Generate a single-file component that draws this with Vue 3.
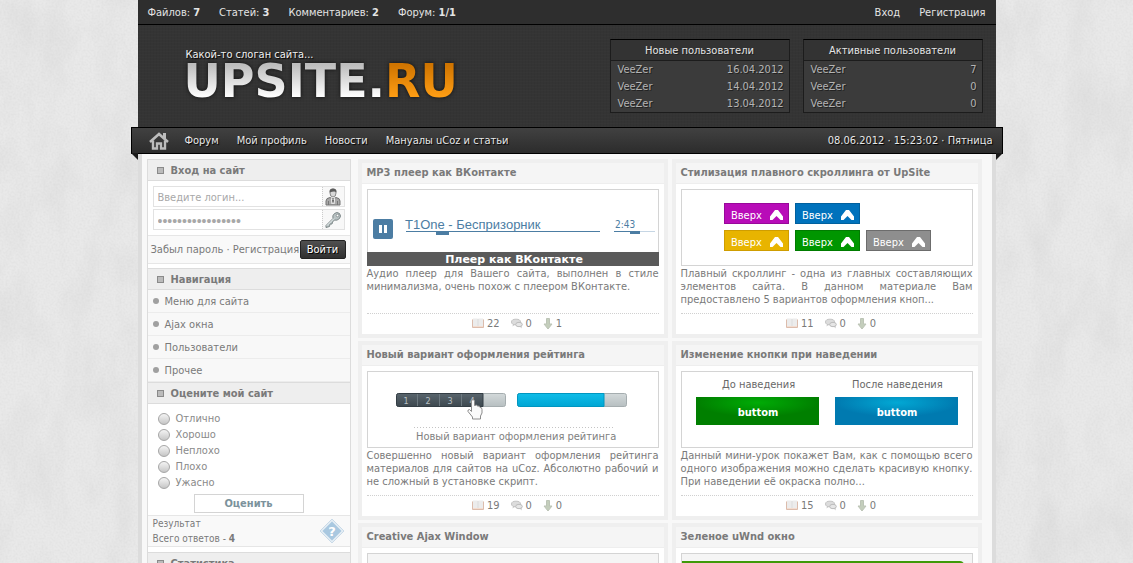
<script setup>
import { ref } from 'vue'

const counters = [
  { label: 'Файлов', value: '7' },
  { label: 'Статей', value: '3' },
  { label: 'Комментариев', value: '2' },
  { label: 'Форум', value: '1/1' }
]

const userBoxes = [
  {
    title: 'Новые пользователи',
    rows: [['VeeZer', '16.04.2012'], ['VeeZer', '14.04.2012'], ['VeeZer', '13.04.2012']]
  },
  {
    title: 'Активные пользователи',
    rows: [['VeeZer', '7'], ['VeeZer', '0'], ['VeeZer', '0']]
  }
]

const mainMenu = ['Форум', 'Мой профиль', 'Новости', 'Мануалы uCoz и статьи']
const sideMenu = ['Меню для сайта', 'Ajax окна', 'Пользователи', 'Прочее']
const answers = ['Отлично', 'Хорошо', 'Неплохо', 'Плохо', 'Ужасно']

const login = ref('')
const password = ref('12345678901234567')
const vote = ref('')

const upButtons = [
  { x: 43, y: 14, fill: '#b80cb8', edge: '#98089a' },
  { x: 114, y: 14, fill: '#0072bc', edge: '#00609e' },
  { x: 43, y: 41, fill: '#e8b400', edge: '#cf9d00' },
  { x: 114, y: 41, fill: '#009600', edge: '#007c00' },
  { x: 185, y: 41, fill: '#8e8e8e', edge: '#6c6c6c' }
]

const cards = [
  {
    kind: 'player',
    title: 'MP3 плеер как ВКонтакте',
    text: 'Аудио плеер для Вашего сайта, выполнен в стиле минимализма, очень похож с плеером ВКонтакте.',
    stats: [22, 0, 1]
  },
  {
    kind: 'scroll',
    title: 'Стилизация плавного скроллинга от UpSite',
    text: 'Плавный скроллинг - одна из главных составляющих элементов сайта. В данном материале Вам предоставлено 5 вариантов оформления кноп...',
    stats: [11, 0, 0]
  },
  {
    kind: 'rating',
    title: 'Новый вариант оформления рейтинга',
    text: 'Совершенно новый вариант оформления рейтинга материалов для сайтов на uCoz. Абсолютно рабочий и не сложный в установке скрипт.',
    stats: [19, 0, 0]
  },
  {
    kind: 'hover',
    title: 'Изменение кнопки при наведении',
    text: 'Данный мини-урок покажет Вам, как с помощью всего одного изображения можно сделать красивую кнопку. При наведении её окраска полно...',
    stats: [15, 0, 0]
  },
  { kind: 'ajax', title: 'Creative Ajax Window', text: '', stats: [] },
  { kind: 'green', title: 'Зеленое uWnd окно', text: '', stats: [] }
]
</script>

<template>
  <div class="page">
    <svg class="paper" aria-hidden="true">
      <filter id="paper-cloud" x="0" y="0" width="100%" height="100%">
        <feTurbulence type="fractalNoise" baseFrequency="0.03 0.014" numOctaves="4" seed="8" />
        <feColorMatrix values="0 0 0 0 0.6  0 0 0 0 0.6  0 0 0 0 0.6  0.6 0 0 0 -0.24" />
      </filter>
      <filter id="paper-grain" x="0" y="0" width="100%" height="100%">
        <feTurbulence type="fractalNoise" baseFrequency="0.5" numOctaves="2" seed="3" />
        <feColorMatrix values="0 0 0 0 0.5  0 0 0 0 0.5  0 0 0 0 0.5  0.3 0 0 0 -0.11" />
      </filter>
      <rect width="100%" height="100%" filter="url(#paper-cloud)" />
      <rect width="100%" height="100%" filter="url(#paper-grain)" />
    </svg>

    <div class="site">
      <div class="topbar">
        <ul class="counters">
          <li v-for="c in counters" :key="c.label">{{ c.label }}: <b>{{ c.value }}</b></li>
        </ul>
        <div class="account">
          <a href="#">Вход</a>
          <a href="#">Регистрация</a>
        </div>
      </div>

      <header class="header">
        <a class="brand" href="#">
          <span class="slogan">Какой-то слоган сайта...</span>
          <span class="logo"><span class="logo-main">UPSITE.</span><span class="logo-zone">RU</span></span>
        </a>
        <div class="boxes">
          <table v-for="box in userBoxes" :key="box.title" class="userbox">
            <thead>
              <tr><th colspan="2">{{ box.title }}</th></tr>
            </thead>
            <tbody>
              <tr v-for="(row, i) in box.rows" :key="i">
                <td>{{ row[0] }}</td>
                <td class="num">{{ row[1] }}</td>
              </tr>
            </tbody>
          </table>
        </div>
      </header>

      <nav class="ribbon">
        <a class="home" href="#" aria-label="Главная">
          <svg width="20" height="18" viewBox="0 0 20 18">
            <path d="M4 8.500V16.500H8V11.500H12V16.500H16V8.500" fill="none" stroke="#bcbcbc" stroke-width="2.400" />
            <path d="M1 10L10 2L19 10" fill="none" stroke="#bcbcbc" stroke-width="2.600" />
            <path d="M14 1H17V8L14 5Z" fill="#bcbcbc" />
          </svg>
        </a>
        <a v-for="m in mainMenu" :key="m" href="#">{{ m }}</a>
        <span class="clock">08.06.2012 · 15:23:02 · Пятница</span>
      </nav>

      <div class="content">
        <aside class="sidebar">
          <section>
            <h2>Вход на сайт</h2>
            <form class="login" @submit.prevent>
              <div class="field">
                <input v-model="login" type="text" placeholder="Введите логин..." aria-label="Логин">
                <span class="field-icon">
                  <svg width="16" height="18" viewBox="0 0 16 18">
                    <path d="M1 17V13Q1 10 5 9.500L8 11L11 9.500Q15 10 15 13V17Z" fill="#a8a8a8" stroke="#747474" />
                    <path d="M6 9.500L8 12L10 9.500L9.500 16H6.500Z" fill="#fafafa" />
                    <path d="M8 11L9 12.500L8 16L7 12.500Z" fill="#555" />
                    <path d="M3.500 13V17M12.500 13V17" stroke="#777" />
                    <ellipse cx="8" cy="5" rx="3" ry="4" fill="#d8d8d8" stroke="#8a8a8a" />
                    <path d="M4.500 4.500Q4 0.500 8 0.500Q12 0.500 11.500 4.500Q10 2.500 4.500 4.500Z" fill="#5c5c5c" />
                  </svg>
                </span>
              </div>
              <div class="field">
                <input v-model="password" class="secret" type="password" aria-label="Пароль">
                <span class="field-icon">
                  <svg width="18" height="18" viewBox="0 0 18 18">
                    <path d="M2 14.500L9 7.500Q8 4.500 10.500 2.500Q13 0.500 15.500 2.500Q17.500 5 15.500 7.500Q13 10 10.500 9L8.500 11L8 13L6 13L5.500 15.500L2 16.500Z" fill="#b9c3c4" stroke="#7d8788" />
                    <path d="M3 14.500L10 7.500" stroke="#e8eeee" />
                    <circle cx="13.500" cy="4.500" r="1.300" fill="#fff" stroke="#7d8788" stroke-width="0.800" />
                  </svg>
                </span>
              </div>
              <div class="login-foot">
                <span><a href="#">Забыл пароль</a> · <a href="#">Регистрация</a></span>
                <button type="submit">Войти</button>
              </div>
            </form>
          </section>

          <section>
            <h2>Навигация</h2>
            <ul class="menu">
              <li v-for="m in sideMenu" :key="m"><a href="#">{{ m }}</a></li>
            </ul>
          </section>

          <section>
            <h2>Оцените мой сайт</h2>
            <form class="poll" @submit.prevent>
              <label v-for="a in answers" :key="a">
                <input v-model="vote" type="radio" name="poll" :value="a">{{ a }}
              </label>
              <button type="submit">Оценить</button>
            </form>
            <div class="result">
              <div>
                <a href="#">Результат</a>
                <p>Всего ответов - <b>4</b></p>
              </div>
              <svg width="26" height="26" viewBox="0 0 26 26">
                <path d="M13 1L25 13L13 25L1 13Z" fill="#e4edf4" stroke="#c9dae8" />
                <path d="M13 3.500L22.500 13L13 22.500L3.500 13Z" fill="#a9c8e0" />
                <text x="13" y="18" class="q">?</text>
              </svg>
            </div>
          </section>

          <section>
            <h2>Статистика</h2>
          </section>
        </aside>

        <main class="cards">
          <article v-for="card in cards" :key="card.kind" class="card">
            <h3><a href="#">{{ card.title }}</a></h3>
            <div class="card-body">
              <svg v-if="card.kind === 'player'" class="thumb" viewBox="0 0 292 77">
                <rect x="0.5" y="0.5" width="291" height="76" fill="#fff" stroke="#d4d4d4" />
                <rect x="6" y="30" width="20" height="20" rx="2" fill="#4c7da3" />
                <path d="M12 36h3v8h-3zM17 36h3v8h-3z" fill="#fff" />
                <text x="38" y="40" class="track">T1One - Беспризорник</text>
                <path d="M39 42h194v1H39zM69 42h13v4H69z" fill="#4c7da3" />
                <text x="248" y="39" class="time">2:43</text>
                <path d="M247 42h26v1h-26zM263 42h10v3h-10z" fill="#4c7da3" />
                <path d="M273 42h15v1h-15z" fill="#c6d6e4" />
                <rect y="63" width="292" height="14" fill="#5a5a5a" />
                <text x="147" y="74" class="caption caption-wide">Плеер как ВКонтакте</text>
              </svg>

              <svg v-else-if="card.kind === 'scroll'" class="thumb" viewBox="0 0 292 77">
                <rect x="0.5" y="0.5" width="291" height="76" fill="#fff" stroke="#d4d4d4" />
                <g v-for="b in upButtons" :key="b.fill" :transform="`translate(${b.x} ${b.y})`">
                  <rect x="0.5" y="0.5" width="64" height="20" :fill="b.fill" :stroke="b.edge" />
                  <text x="7" y="16" class="up">Вверх</text>
                  <path d="M46 17V13.500L51 7H54L59 13.500V17H56.500L52.500 13L48.500 17Z" fill="#fff" />
                </g>
              </svg>

              <svg v-else-if="card.kind === 'rating'" class="thumb" viewBox="0 0 292 77">
                <defs>
                  <linearGradient id="rate-empty" x2="0" y2="1"><stop stop-color="#d3d9da" /><stop offset="1" stop-color="#b7bfc1" /></linearGradient>
                  <linearGradient id="rate-dark" x2="0" y2="1"><stop stop-color="#59656d" /><stop offset="1" stop-color="#3d484f" /></linearGradient>
                  <linearGradient id="rate-blue" x2="0" y2="1"><stop stop-color="#10bde8" /><stop offset="1" stop-color="#00a6d4" /></linearGradient>
                </defs>
                <rect x="0.5" y="0.5" width="291" height="76" fill="#fff" stroke="#d4d4d4" />
                <rect x="29.5" y="22.500" width="109" height="13" rx="2" fill="url(#rate-empty)" stroke="#a5adaf" />
                <path d="M116 22.500H31.500Q29.500 22.500 29.500 24.500V33.500Q29.500 35.500 31.500 35.500H116Z" fill="url(#rate-dark)" stroke="#333d44" />
                <path d="M50.500 23V35M72.500 23V35M94.500 23V35" stroke="#6d7980" />
                <text x="39" y="33" class="digit">1</text>
                <text x="61" y="33" class="digit">2</text>
                <text x="83" y="33" class="digit">3</text>
                <text x="105" y="33" class="digit">4</text>
                <rect x="150.500" y="22.500" width="109" height="13" rx="2" fill="url(#rate-empty)" stroke="#a5adaf" />
                <path d="M237 22.500H152.500Q150.500 22.500 150.500 24.500V33.500Q150.500 35.500 152.500 35.500H237Z" fill="url(#rate-blue)" stroke="#0096c0" />
                <path d="M104.500 39V30.500Q104.500 28.500 106 28.500Q107.500 28.500 107.500 30.500V34.500Q110 33.500 110.500 35Q113 34.500 113 36.500Q115 36 115 38.500V42L113.500 45V48H105.500V46L101 40.500Q100.500 38.500 102.500 38.500L104.500 40.500Z" fill="#fafafa" stroke="#8c8c8c" />
                <path d="M47 56.500H246" stroke="#c4c4c4" stroke-dasharray="1 2" />
                <text x="49" y="69" class="note">Новый вариант оформления рейтинга</text>
              </svg>

              <svg v-else-if="card.kind === 'hover'" class="thumb" viewBox="0 0 292 77">
                <defs>
                  <radialGradient id="btn-green" cx="0.5" cy="0.2" r="0.5"><stop stop-color="#00ac06" /><stop offset="1" stop-color="#007f00" /></radialGradient>
                  <radialGradient id="btn-blue" cx="0.5" cy="0.2" r="0.5"><stop stop-color="#02a8d4" /><stop offset="1" stop-color="#007ab0" /></radialGradient>
                </defs>
                <rect x="0.5" y="0.5" width="291" height="76" fill="#fff" stroke="#d4d4d4" />
                <text x="41" y="17" class="state">До наведения</text>
                <text x="171" y="17" class="state">После наведения</text>
                <rect x="15" y="26" width="123" height="28" fill="url(#btn-green)" />
                <rect x="154" y="26" width="123" height="28" fill="url(#btn-blue)" />
                <text x="77" y="45" class="caption">buttom</text>
                <text x="216" y="45" class="caption">buttom</text>
              </svg>

              <svg v-else class="thumb" viewBox="0 0 292 77">
                <rect x="0.5" y="0.5" width="291" height="76" fill="#f5f5f5" stroke="#d4d4d4" />
                <path v-if="card.kind === 'green'" d="M1 8H279Q283 8 284 14V60H1Z" fill="#3f9a08" />
              </svg>

              <p v-if="card.text" class="text">{{ card.text }}</p>
              <div v-if="card.stats.length" class="stats">
                <span>
                  <svg width="12" height="11" viewBox="0 0 12 11">
                    <path d="M0.500 1.500V9.500H11.500V1.500" fill="#f4ddd0" stroke="#dcbcac" />
                    <path d="M1 0.500H5.500L6 1L6.500 0.500H11V8H1Z" fill="#ececec" />
                    <path d="M6 1V8" stroke="#dcdcdc" />
                  </svg>{{ card.stats[0] }}
                </span>
                <span>
                  <svg width="12" height="11" viewBox="0 0 12 11">
                    <ellipse cx="5" cy="4" rx="4.500" ry="2.800" fill="#dcdcdc" stroke="#c4c4c4" />
                    <path d="M2 6L1.500 8.500L4 6.500" fill="#c4c4c4" />
                    <ellipse cx="8" cy="6.500" rx="3.300" ry="2.200" fill="#e6e6e6" stroke="#bcbcbc" />
                    <path d="M9 8.500L10.500 10.500L10.500 8" fill="#bcbcbc" />
                  </svg>{{ card.stats[1] }}
                </span>
                <span>
                  <svg width="10" height="12" viewBox="0 0 10 12">
                    <path d="M3.500 0.500H6.500V6H9L5 11L1 6H3.500Z" fill="#c4cebc" stroke="#bcc4b6" />
                  </svg>{{ card.stats[2] }}
                </span>
              </div>
            </div>
          </article>
        </main>
      </div>
    </div>
  </div>
</template>

<style>
body {
  margin: 0;
  background: #e9e9e9;
}
</style>

<style scoped>
.page {
  position: relative;
  height: 100vh;
  overflow: hidden;
  font: 11px/13px "DejaVu Sans Condensed", "DejaVu Sans", sans-serif;
  color: #7a7a7a;
}
.page *, .page *::before, .page *::after { box-sizing: border-box; }
a { color: inherit; text-decoration: none; }
ul, p, h2, h3 { margin: 0; padding: 0; list-style: none; }
button, input { font: inherit; }

.paper {
  position: absolute;
  inset: 0;
  width: 100%;
  height: 100%;
}
.site {
  position: relative;
  max-width: 858px;
  margin: 0 auto;
}

.topbar {
  display: flex;
  justify-content: space-between;
  align-items: center;
  height: 25px;
  padding: 0 10px;
  background: #2e2e2e;
  border-bottom: 1px solid #000;
  color: #e4e4e4;
}
.counters { display: flex; gap: 19px; }
.account { display: flex; gap: 19px; }

.header {
  display: flex;
  justify-content: space-between;
  align-items: flex-start;
  height: 102px;
  padding: 14px 13px 0 46px;
  background:
    repeating-linear-gradient(0deg, rgba(255, 255, 255, 0.01) 0 1px, transparent 1px 3px),
    repeating-linear-gradient(90deg, rgba(0, 0, 0, 0.03) 0 1px, transparent 1px 3px),
    #343434;
}
.brand {
  display: flex;
  flex-direction: column;
  gap: 2px;
  padding-top: 9px;
}
.slogan {
  padding-left: 2px;
  color: #f0f0f0;
  text-shadow: 1px 1px 1px #000;
}
.logo {
  font: bold 46px/36px "DejaVu Sans", sans-serif;
  filter: drop-shadow(0 0 2px #111);
}
.logo-main, .logo-zone {
  background: linear-gradient(#bdbdbd 20%, #fff 80%);
  -webkit-background-clip: text;
  background-clip: text;
  color: transparent;
}
.logo-zone { background-image: linear-gradient(#cf7400 20%, #ff9e14 80%); }
.boxes { display: flex; gap: 13px; }
.userbox {
  width: 180px;
  border: 1px solid #1c1c1c;
  border-top-color: #000;
  border-collapse: separate;
  border-spacing: 0;
  background: #3b3b3b;
  color: #b4b4b4;
  text-shadow: 1px 1px 0 #222;
}
.userbox th {
  height: 21px;
  padding: 0;
  background: #333;
  border-bottom: 1px solid #1c1c1c;
  color: #e4e4e4;
  font-weight: normal;
}
.userbox td { height: 17px; padding: 0 5px 0 7px; }
.userbox .num { text-align: right; }

.ribbon {
  position: relative;
  display: flex;
  align-items: center;
  gap: 18px;
  height: 27px;
  margin: 0 -7px;
  padding: 0 9px 0 17px;
  background: linear-gradient(#414141, #2c2c2c);
  border: 1px solid #000;
  color: #e8e8e8;
  text-shadow: 1px 1px 1px #000;
}
.ribbon::before, .ribbon::after {
  content: "";
  position: absolute;
  top: 100%;
  left: -1px;
  border-top: 7px solid #1a1a1a;
  border-left: 7px solid transparent;
}
.ribbon::after {
  left: auto;
  right: -1px;
  border-left: 0;
  border-right: 7px solid transparent;
}
.home { display: flex; margin-right: -2px; }
.clock { margin-left: auto; }

.content {
  display: flex;
  gap: 7px;
  padding: 5px 10px 20px 5px;
  background: #f8f8f8;
  border: 4px solid #dcdcdc;
  border-width: 0 4px;
}
.sidebar {
  flex: 0 0 204px;
  min-width: 0;
  border: 1px solid #dcdcdc;
  border-top: 0;
  background: #fff;
}
.sidebar h2 {
  display: flex;
  align-items: center;
  gap: 7px;
  height: 22px;
  padding-left: 9px;
  background: #eee;
  border: 1px solid #dcdcdc;
  border-width: 1px 0;
  font-size: 11px;
}
.sidebar h2::before {
  content: "";
  width: 7px;
  height: 7px;
  background: #bbb;
  border: 1px solid #8a8a8a;
}
.login { padding-bottom: 4px; }
.field {
  display: flex;
  height: 21px;
  margin: 2px 5px 0;
  border: 1px solid #e2e2e2;
}
.field:first-child { margin-top: 5px; }
.field input {
  flex: 1;
  width: 0;
  min-width: 0;
  padding: 2px 4px 0;
  border: 0;
  background: none;
  outline: none;
  color: #a8a8a8;
}
.field input::placeholder { color: #a8a8a8; opacity: 1; }
.field .secret { font-family: "Liberation Sans", Arial, sans-serif; font-size: 14px; }
.field-icon {
  display: flex;
  align-items: center;
  justify-content: center;
  width: 22px;
  background: #f8f8f8;
  border-left: 1px dotted #ccc;
}
.login-foot {
  display: flex;
  align-items: center;
  justify-content: space-between;
  height: 29px;
  margin-top: 5px;
  padding: 0 4px 0 3px;
  background: #f9f9f9;
  border: 1px solid #e6e6e6;
  border-width: 1px 0;
  white-space: nowrap;
}
.login-foot button {
  width: 46px;
  height: 19px;
  padding: 0;
  background: linear-gradient(#505050, #303030);
  border: 1px solid #222;
  border-radius: 2px;
  color: #fff;
  text-shadow: 1px 1px 0 #000;
}
.menu { background: #f8f8f8; }
.menu li {
  display: flex;
  align-items: center;
  gap: 6px;
  height: 23px;
  padding-left: 5px;
  border-bottom: 1px solid #ececec;
}
.menu li::before {
  content: "";
  width: 6px;
  height: 6px;
  border-radius: 50%;
  background: #a0a0a0;
}
.poll {
  display: flex;
  flex-direction: column;
  padding: 6px 10px 2px;
}
.poll label {
  display: flex;
  align-items: center;
  gap: 6px;
  height: 16px;
  color: #8a8a8a;
}
.poll input {
  appearance: none;
  width: 12px;
  height: 12px;
  margin: 2px 0 0;
  border: 1px solid #a6a6a6;
  border-radius: 50%;
  background: linear-gradient(#f4f4f4, #c6c6c6);
}
.poll button {
  align-self: center;
  width: 110px;
  height: 19px;
  margin-top: 4px;
  padding: 0;
  background: #fff;
  border: 1px solid #d4d4d4;
  color: #7c929c;
  font-weight: bold;
}
.result {
  display: flex;
  align-items: center;
  justify-content: space-between;
  height: 32px;
  margin-bottom: 5px;
  padding: 0 5px;
  background: #f9f9f9;
  border: 1px solid #e6e6e6;
  border-width: 1px 0;
  font-size: 10px;
  line-height: 15px;
}
.q {
  fill: #fff;
  font: bold 13px "DejaVu Sans", sans-serif;
  text-anchor: middle;
}

.cards {
  flex: 1;
  display: grid;
  grid-template-columns: repeat(2, 1fr);
  gap: 3px 4px;
}
.card {
  height: 179px;
  border: 4px solid #efefef;
  background: #fff;
}
.card h3 {
  height: 21px;
  padding-left: 5px;
  background: #f5f5f5;
  border-bottom: 1px solid #eee;
  font-size: 11px;
  line-height: 20px;
}
.card-body { padding: 5px 5px 0; }
.thumb {
  display: block;
  width: 100%;
}
.text {
  height: 39px;
  margin-top: 1px;
  text-align: justify;
}
.stats {
  display: flex;
  justify-content: center;
  gap: 11px;
  height: 20px;
  margin-top: 7px;
  padding-left: 9px;
  border-top: 1px dotted #d0d0d0;
}
.stats span { display: flex; align-items: center; gap: 3px; }

.track { fill: #4c7da3; font: 13px "Liberation Sans", Arial, sans-serif; }
.time { fill: #4c7da3; font-size: 10px; }
.caption { fill: #fff; font-weight: bold; text-anchor: middle; }
.caption-wide { font-family: "DejaVu Sans", sans-serif; }
.up { fill: #fff; }
.digit { fill: #b8c0c4; font-size: 9px; text-anchor: middle; }
.note { fill: #808080; }
.state { fill: #686868; }
</style>
